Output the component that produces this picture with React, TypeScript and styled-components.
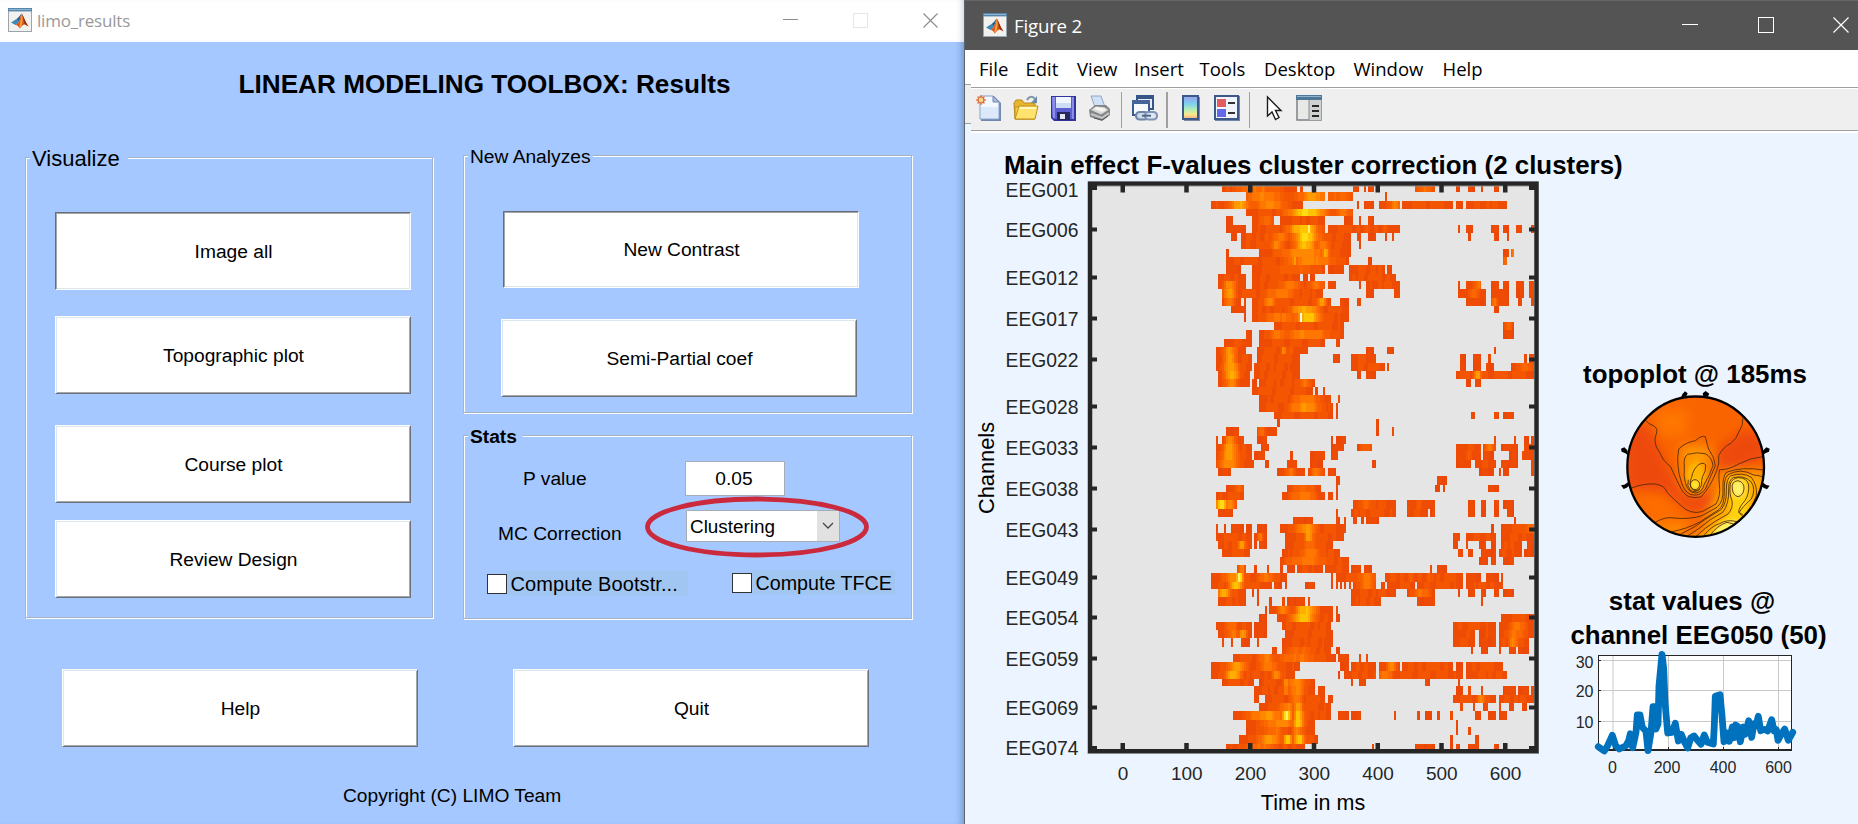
import React from "react";
import styled, { createGlobalStyle, css } from "styled-components";

const GlobalStyle = createGlobalStyle`
  * { box-sizing: border-box; }
  body { margin: 0; background: #ecf5ff; overflow: hidden; font-family: "Liberation Sans", Arial, sans-serif; color: #000; }
  svg { display: block; }
`;

const BLUE = "#a4c8ff";
const UI_FONT = `"Open Sans", "Noto Sans", sans-serif`;

const Desktop = styled.main`
  display: flex;
  width: 1858px;
  height: 824px;
  overflow: hidden;
`;

/* ---------- dialog window ---------- */

const Dialog = styled.section`
  display: flex;
  flex-direction: column;
  width: 964px;
  height: 824px;
  background: ${BLUE};
  box-shadow: inset -7px 0 7px -5px rgba(50, 80, 120, 0.45);
`;

const DialogBar = styled.header`
  display: flex;
  align-items: center;
  height: 42px;
  padding: 0 26px 2px 8px;
  background: #fff;
  box-shadow: inset -6px 0 7px -5px rgba(50, 80, 120, 0.3);
`;

const BarTitle = styled.span<{ $color: string; $size: number; $gap: number; $drop?: number }>`
  flex: 1;
  margin-left: ${(p) => p.$gap}px;
  padding-top: ${(p) => p.$drop ?? 0}px;
  color: ${(p) => p.$color};
  font: ${(p) => p.$size}px/24px ${UI_FONT};
  letter-spacing: -0.2px;
`;

const WindowButtons = styled.div<{ $gap: number }>`
  display: flex;
  gap: ${(p) => p.$gap}px;
`;

const DialogTitle = styled.h1`
  margin: 27px 0 0 5px;
  font-size: 26.15px;
  line-height: 30px;
  font-weight: 700;
  text-align: center;
  white-space: nowrap;
`;

const Columns = styled.div`
  display: flex;
  align-items: flex-start;
  gap: 30px;
  height: 570px;
  padding: 56px 0 0 25px;
`;

const RightColumn = styled.div`
  display: flex;
  flex-direction: column;
  gap: 22px;
`;

const Group = styled.div<{ $w: number; $h: number; $drop?: number }>`
  display: flex;
  flex-direction: column;
  width: ${(p) => p.$w}px;
  height: ${(p) => p.$h}px;
  margin-top: ${(p) => p.$drop ?? 0}px;
  border: 1px solid #a5b3c4;
  box-shadow: 1px 1px 0 #fdffff, inset 1px 1px 0 #fdffff;
`;

const Legend = styled.div<{ $size: number; $bold?: boolean; $w: number }>`
  align-self: flex-start;
  width: ${(p) => p.$w}px;
  height: 26px;
  margin: -12px 0 0 4px;
  padding-left: 2px;
  background: ${BLUE};
  font-size: ${(p) => p.$size}px;
  line-height: 26px;
  font-weight: ${(p) => (p.$bold ? 700 : 400)};
  white-space: nowrap;
`;

const raised = css`
  border-color: #fff #6d727a #6d727a #fff;
  box-shadow: inset 1px 1px 0 #dbe7ee, inset -1px -1px 0 #a3a6aa;
`;
const sunken = css`
  border-color: #686c75 #fff #fff #686c75;
  box-shadow: inset 1px 1px 0 #a3a6aa, inset -1px -1px 0 #dbe7e8;
`;

const PushButton = styled.button<{ $sunken?: boolean; $top?: number; $left?: number; $h?: number }>`
  flex: none;
  width: 356px;
  height: ${(p) => p.$h ?? 78}px;
  margin: ${(p) => p.$top ?? 0}px 0 0 ${(p) => p.$left ?? 0}px;
  padding: 1px 0 0 1px;
  background: #fff;
  border: 1px solid;
  ${(p) => (p.$sunken ? sunken : raised)}
  font: 19.2px "Liberation Sans", Arial, sans-serif;
  color: #000;
`;

const StatsRow = styled.div<{ $top: number; $left: number }>`
  display: flex;
  align-items: flex-start;
  margin: ${(p) => p.$top}px 0 0 ${(p) => p.$left}px;
`;

const FieldLabel = styled.label<{ $w: number; $drop: number }>`
  width: ${(p) => p.$w}px;
  padding-top: ${(p) => p.$drop}px;
  font-size: 19.2px;
  line-height: 22px;
  white-space: nowrap;
`;

const NumberBox = styled.div`
  width: 100px;
  height: 35px;
  padding-right: 2px;
  border: 1px solid #a6adb5;
  background: #fff;
  font-size: 19.2px;
  line-height: 34px;
  text-align: center;
`;

const Popup = styled.div`
  position: relative;
  display: flex;
  justify-content: space-between;
  width: 154px;
  height: 32px;
  padding-left: 3px;
  border: 1px solid #a6adb5;
  background: #fff;
  font-size: 18.9px;
  line-height: 31px;
`;

const PopupArrow = styled.span`
  display: flex;
  align-items: center;
  justify-content: center;
  width: 22px;
  background: #e1e1e1;
`;

const Highlight = styled.svg`
  position: absolute;
  left: -43px;
  top: -16px;
`;

const Checks = styled(StatsRow)`
  gap: 44px;
`;

const Check = styled.div<{ $w: number; $lift?: number }>`
  display: flex;
  align-items: center;
  width: ${(p) => p.$w}px;
  margin-top: -${(p) => p.$lift ?? 0}px;
`;

const CheckBox = styled.span`
  flex: none;
  width: 20px;
  height: 20px;
  border: 1px solid #333;
  background: #fff;
`;

const CheckText = styled.span<{ $size: number; $spacing?: number }>`
  flex: 1;
  height: 25px;
  padding-left: 4px;
  background: #a1c6f1;
  font-size: ${(p) => p.$size}px;
  line-height: 26px;
  letter-spacing: ${(p) => p.$spacing ?? 0}px;
  white-space: nowrap;
`;

const Actions = styled.div`
  display: flex;
  gap: 95px;
  padding-left: 62px;
`;

const Copyright = styled.footer`
  margin: 36px 0 0 343px;
  font-size: 19.2px;
  line-height: 26px;
`;

/* ---------- figure window ---------- */

const Figure = styled.section`
  display: flex;
  flex-direction: column;
  width: 894px;
  height: 824px;
  border-left: 1px solid #5d6570;
  background: #ecf5ff;
`;

const FigureBar = styled.header`
  display: flex;
  align-items: center;
  height: 50px;
  padding: 0 9px 2px 18px;
  border-top: 1px solid #676767;
  background: #545454;
`;

const MenuBar = styled.nav`
  display: flex;
  height: 37px;
  padding-left: 14px;
  background: #fff;
  font: 18.5px/38px ${UI_FONT};
`;

const MenuItem = styled.span<{ $w: number }>`
  width: ${(p) => p.$w}px;
  white-space: nowrap;
`;

const ToolbarRow = styled.div`
  display: flex;
  height: 46px;
`;

const ToolbarEdge = styled.div`
  width: 6px;
  height: 40px;
  margin-top: -3px;
  border: solid #a0a0a0;
  border-width: 1px 0;
  background: #efefef;
`;

const Toolbar = styled.div`
  display: flex;
  flex: 1;
  align-items: flex-start;
  height: 46px;
  padding: 5px 0 0 5px;
  background: linear-gradient(#a0a0a0 0 1px, #fff 1px 2px, #efefef 2px 43px, #a0a0a0 43px 44px, #fff 44px 46px);
`;

const Tool = styled.span<{ $w: number }>`
  width: ${(p) => p.$w}px;
  padding-top: 3px;
`;

const Separator = styled.span<{ $w: number; $thick?: number }>`
  width: ${(p) => p.$w}px;
  height: 36px;
  border-left: ${(p) => p.$thick ?? 1}px solid #a0a0a0;
`;

const PlotTitle = styled.h2<{ $shift?: number; $line?: number; $above?: number }>`
  margin: 0 0 0 ${(p) => p.$shift ?? 0}px;
  padding-top: ${(p) => p.$above ?? 0}px;
  font-size: 25.9px;
  line-height: ${(p) => p.$line ?? 30}px;
  font-weight: 700;
  text-align: center;
  white-space: nowrap;
`;

const MainTitle = styled(PlotTitle)`
  height: 47px;
  padding: 17px 0 0 39px;
  text-align: left;
`;

const Plots = styled.div`
  display: flex;
  padding-left: 6px;
`;

const SidePlots = styled.div`
  display: flex;
  flex-direction: column;
  align-items: center;
  width: 278px;
  margin-left: 11px;
  padding-top: 179px;
`;

const CourseFrame = styled.div`
  margin: -3px 18px 0 0;
`;

/* ---------- icons ---------- */

const MatlabIcon = () => (
  <svg width="24" height="24" viewBox="0 0 24 24">
    <rect x=".5" y=".5" width="23" height="23" fill="#f1f1f0" stroke="#9aa5ae" />
    <rect x="0" y="0" width="24" height="3.4" fill="#5685ab" />
    <rect x="1" y="1" width="22" height="1" fill="#8fb4d0" />
    <path d="M3 14.5 8.5 11l2.5 3-3.5 3z" fill="#3f87b5" />
    <path d="M8.5 11C10.500 10 11.500 8 13.500 5.500L11 14z" fill="#24608f" />
    <path d="M7.500 17 11 14C12 11 12.500 8 13.700 5.500 15.500 8 17 13.500 20.500 18.500 18 17 16.700 15.600 15 17L11.500 20.500C10.500 18.500 9.500 17 7.500 17z" fill="#d95319" />
    <path d="M13.700 5.500C15 8 15 13 13.300 18.700L11.500 20.500C10.800 19 12.900 12 13.700 5.500z" fill="#f2a13c" />
    <path d="M13.900 5.500C15.800 8.500 17.200 14 20.500 18.500L16.500 15.800C15.500 12 15 8.500 13.900 5.500z" fill="#932a12" />
  </svg>
);

const MinIcon = ({ size, color }: { size: number; color: string }) => (
  <svg width={size} height={size} viewBox={`0 0 ${size} ${size}`} shapeRendering="crispEdges">
    <rect x="0" y={Math.floor(size / 2) - 1} width={size} height="1" fill={color} />
  </svg>
);
const MaxIcon = ({ size, color }: { size: number; color: string }) => (
  <svg width={size} height={size} viewBox={`0 0 ${size} ${size}`}>
    <rect x=".5" y=".5" width={size - 1} height={size - 1} fill="none" stroke={color} />
  </svg>
);
const CloseIcon = ({ size, color }: { size: number; color: string }) => (
  <svg width={size} height={size} viewBox={`0 0 ${size} ${size}`}>
    <path d={`M.5 .5 ${size - 0.5} ${size - 0.5}M${size - 0.5} .5 .5 ${size - 0.5}`} stroke={color} strokeWidth="1.2" />
  </svg>
);

const NewIcon = () => (
  <svg width="26" height="26" viewBox="0 0 26 26">
    <path d="M5 1h13l7 7v18H5z" fill="#7388ad" />
    <path d="M4 1h13l6 6v17H4z" fill="#f3f8ff" stroke="#7f9dcb" />
    <path d="M5 12h17v11H5z" fill="#dce9fb" />
    <path d="M17 1v6h6z" fill="#a9bddf" stroke="#7388b8" />
    <g stroke="#e58a5b" strokeWidth="1.6"><path d="M5 0v10M0 5h10M1.500 1.500l7 7M8.500 1.500l-7 7" /></g>
    <circle cx="5" cy="5" r="3" fill="#fbd28d" stroke="#d6693c" strokeWidth="1.2" />
  </svg>
);
const OpenIcon = () => (
  <svg width="26" height="26" viewBox="0 0 26 26">
    <path d="M1 8l2-3h6l2 3h11v16H2z" fill="#e7b52d" stroke="#b98a1e" />
    <path d="M2 12h19v12H2z" fill="#f6cf4a" stroke="#c1901f" />
    <path d="M6 11h19l-3 13H2z" fill="#ffe36d" stroke="#c1901f" />
    <path d="M7 13h16" stroke="#fff7bd" strokeWidth="2" />
    <path d="M14 5c2-4 6-4 8-1" fill="none" stroke="#7c95ab" strokeWidth="2" />
    <path d="M24 1v7h-6z" fill="#6c8ba6" />
  </svg>
);
const SaveIcon = () => (
  <svg width="25" height="26" viewBox="0 0 25 26">
    <path d="M0 1h25v25H3l-3-3z" fill="#33349a" />
    <path d="M1 2h22v22H3l-2-2z" fill="#5d5fd0" />
    <path d="M1 2h3v21H2zM21 2h2v22h-2z" fill="#8b8deb" />
    <rect x="5" y="2" width="15" height="11" fill="#f1f5ff" />
    <path d="M5 8h15v5H5z" fill="#cddcf5" />
    <rect x="6" y="17" width="13" height="8" fill="#26275d" />
    <rect x="9" y="19" width="5" height="5" fill="#e5e8f2" />
  </svg>
);
const PrintIcon = () => (
  <svg width="24" height="26" viewBox="0 0 24 26">
    <path d="M3 1h10l4 11H7z" fill="#cfe0f7" stroke="#8ea6c8" />
    <path d="M1 15l6-5h11l4 4v6l-8 6L2 22z" fill="#85878a" />
    <path d="M2 15l6-4 9 1 4 3-8 5z" fill="#d7d8d6" stroke="#77797b" strokeWidth=".7" />
    <path d="M8 12l8 1 2 2-4 2-8-3z" fill="#f5f5ef" />
    <path d="M3 19l11 4 7-5" fill="none" stroke="#c5c7c9" strokeWidth="2" />
    <path d="M6 23l8 2 6-4" fill="none" stroke="#55585b" />
  </svg>
);
const LinkIcon = () => (
  <svg width="26" height="26" viewBox="0 0 26 26">
    <rect x="5" y="1" width="16" height="13" fill="#e9effa" stroke="#355487" strokeWidth="2" />
    <rect x="4" y="0" width="18" height="4" fill="#355487" />
    <rect x="1" y="6" width="16" height="14" fill="#f7faff" stroke="#3c5b8e" strokeWidth="2" />
    <rect x="0" y="5" width="18" height="4" fill="#44649a" />
    <rect x="4" y="17" width="12" height="7.500" rx="3.700" fill="#cfd9e7" stroke="#6c84a5" strokeWidth="2.200" />
    <rect x="13" y="17" width="12" height="7.500" rx="3.700" fill="#dfe6f0" stroke="#7f95b3" strokeWidth="2.200" />
    <path d="M10 20.700h9" stroke="#4d668a" strokeWidth="2" />
  </svg>
);
const ColorbarIcon = () => (
  <svg width="18" height="26" viewBox="0 0 18 26">
    <defs>
      <linearGradient id="cb" x2="0" y2="1">
        <stop offset="0" stopColor="#9b9ff0" /><stop offset=".35" stopColor="#7fd2ee" />
        <stop offset=".6" stopColor="#b7eeb5" /><stop offset=".8" stopColor="#f8e98e" /><stop offset="1" stopColor="#f5a984" />
      </linearGradient>
    </defs>
    <rect x="2" y="2" width="16" height="24" fill="#7c8aa3" />
    <rect x="1" y="1" width="15" height="23" fill="url(#cb)" stroke="#3d5788" strokeWidth="2" />
  </svg>
);
const LegendIcon = () => (
  <svg width="26" height="26" viewBox="0 0 26 26">
    <rect x="1" y="1" width="25" height="25" fill="#7286ab" />
    <rect x="1" y="1" width="23" height="23" fill="#f0f4fd" stroke="#3d5788" strokeWidth="2" />
    <rect x="3" y="4" width="9" height="8" fill="#e25b5f" />
    <rect x="3" y="14" width="9" height="8" fill="#6368e6" />
    <path d="M14 8h7M14 18h7" stroke="#333" strokeWidth="2" />
  </svg>
);
const ArrowIcon = () => (
  <svg width="17" height="26" viewBox="0 0 17 26">
    <path d="M1.500 2v19l4.500-4 3.500 7.500 3.500-2-3.500-7H15z" fill="#fff" stroke="#1d1d1d" strokeWidth="1.400" />
  </svg>
);
const PanelIcon = () => (
  <svg width="26" height="26" viewBox="0 0 26 26">
    <rect x="1" y="1" width="24" height="24" fill="#e8e8e6" stroke="#7b8188" strokeWidth="1.500" />
    <rect x="0" y="0" width="26" height="5" fill="#4d7796" />
    <rect x="1" y="1" width="24" height="1" fill="#8fb2ca" />
    <rect x="13" y="5" width="12" height="20" fill="#cfd0d0" />
    <path d="M13 5v20" stroke="#85898d" />
    <path d="M16 11h7M16 16h7M16 21h7" stroke="#262626" strokeWidth="2" />
  </svg>
);

/* ---------- channel x time image ---------- */

// Top edge of every channel row, then the bottom of the last one.
const ROW_Y = [
  185, 192, 201, 209, 216, 225, 233, 241, 249, 257, 265, 274, 281, 289, 298, 306, 313, 322, 330, 339, 347, 354, 363, 371,
  379, 387, 395, 403, 412, 419, 427, 436, 444, 451, 460, 468, 476, 485, 492, 500, 509, 517, 524, 533, 541, 549, 557, 565,
  573, 582, 589, 597, 606, 614, 622, 630, 638, 647, 654, 662, 671, 679, 686, 695, 703, 711, 720, 727, 735, 744, 750,
];

// Each row: significant spans "from-to" in thirds of a pixel, then peaks "centre,width,level".
const ROWS = `
126-351 360-369 519-537 552-558 564-582 705-765 828-840 864-885 903-909 942-957|230,60,.4 735,20,.4
198-435 444-519 615-621|250,50,.52 400,40,.6 480,30,.35
93-369 531-537 552-582 597-660 666-819 828-849 858-981|180,22,.72 270,40,.52 645,12,.52
198-519|380,45,.9 490,20,.45
138-159 216-282 300-435 492-519 537-543 564-582|260,15,.4
138-198 216-435 444-660 834-840 858-879 933-957 969-987 1008-1026 1053-1064|370,35,.85 385,5,1.05
153-171 183-513 531-543 564-588 615-621 636-642 864-873 942-957 981-987|378,30,.88 300,20,.45
183-513 537-543|375,25,.8 290,15,.55 430,15,.5
138-147 237-513 969-987 993-1002|370,60,.55 437,8,.75 998,5,.5
138-507 564-576 969-981|390,60,.55 345,6,.65 975,8,.4
138-183 216-435 444-492 507-615 621-636|350,60,.3
114-198 216-360 369-384 390-405 507-648|
114-198 216-435 444-468 537-543 558-660 834-840 858-903 933-957 969-987 1008-1032 1047-1064|148,14,.6 330,30,.45 410,20,.4 895,14,.4
126-429 558-582 642-660 834-918 933-987 1008-1032 1047-1064|148,14,.65 300,40,.45 880,10,.4
126-183 192-198 216-453 480-507 531-543 858-918 933-987 1014-1026 1053-1064|150,12,.5 270,15,.55 425,12,.6 945,8,.45
153-198 216-507 942-957|375,35,.7
192-198 216-507|385,28,.85 300,40,.45 363,4,1.7
282-492 969-1002|984,10,.35
198-216 237-492 969-1002|380,60,.5 290,20,.45
132-216 237-435 468-480|
108-198 231-384 558-582 621-642 942-948|148,16,.6 312,5,.6
108-216 231-360 459-480 513-588 840-858 879-903 924-933 1032-1041 1047-1064|150,16,.62
108-216 222-360 513-615 621-627 840-858 879-903 918-942 993-1064|153,18,.68 1035,20,.36
114-210 222-360 531-543 558-588 828-1064|155,18,.72 893,9,.65
114-210 216-231 237-405 858-873 885-903|155,18,.5 375,15,.4
216-399 405-414 429-435|
237-453 474-480|378,32,.5
237-459 468-474|375,38,.6
282-459 468-474 873-885 942-957 969-1002|
291-300 588-597|
138-177 231-291 588-597 636-642|245,10,.35
108-114 126-192 231-261 453-459 468-498 942-948 1002-1008 1032-1047 1053-1064|150,12,.55
108-216 243-267 453-492 531-576 828-903 909-948 963-1014 1032-1064|150,18,.65 560,12,.35 930,12,.42
108-216 222-255 330-339 390-435 453-474 828-903 909-942 987-1014 1026-1064|150,20,.65
108-222 255-267 321-351 390-429 576-588 828-873 885-948 963-1014 1053-1064|148,24,.6
114-153 291-375 384-435 444-468 897-942 957-963 969-987 1053-1064|333,10,.45 410,12,.5
468-480 771-801|
138-192 321-423 468-474 765-780 789-795 924-957|370,30,.35 175,10,.35
108-192 306-435 444-459 468-474|370,30,.48
108-171 519-648 681-765 864-885 903-918 942-957 969-1002|125,14,.95 148,15,.55 560,20,.32
114-159 468-474 513-648 681-744 750-765 864-885 903-918 942-957 981-1002|
339-399 468-480 492-498 519-531 543-552 558-597 1002-1008|
108-114 132-138 153-192 198-216 231-261 300-498 933-942 963-1064|378,26,.6 1050,12,.4
108-216 222-231 231-261 315-492 819-840 858-948 963-1064|388,12,.66 240,6,.5
114-216 222-231 237-261 315-459 819-834 858-864 897-918 933-948 963-1026 1041-1064|185,10,.6 390,15,.4
126-210 306-480 834-849 864-879 903-948 957-1026 1032-1064|390,24,.5
300-507 897-924 933-948 969-1002|380,50,.45
171-198 222-231 261-267 300-309 321-345 351-429 435-507 513-543 552-576 750-756 771-801|185,8,.5
93-321 453-459 468-588 615-849 858-903 918-957 963-969|178,10,.95 160,22,.6 260,20,.45 560,20,.45
93-276 282-306 315-321 375-405 453-459 468-474 480-486 492-498 507-513 519-588 603-615 621-705 711-849 858-969|168,18,.8 560,20,.45
114-198 216-222 231-237 513-648 681-765 834-840 864-885 903-918 942-957 969-1002|132,14,.8 725,25,.4
114-198 231-237 267-276 306-315 321-375 384-390 513-603 711-765 903-909|
255-261 267-459 468-474|378,24,.82 310,15,.5
237-261 291-459 468-480 963-1064|370,26,.86
108-216 222-261 306-453 819-948 957-1064|155,15,.4 1015,20,.46
114-216 222-261 315-459 819-885 897-948 957-1064|188,10,.62 160,15,.45 1008,22,.45
126-132 153-159 183-210 231-237 306-459 819-885 897-948 957-1047|1000,12,.52
276-291 306-453 468-480 873-879 903-924 957-963 987-1008 1014-1047|360,30,.35
159-468 474-507 537-543 558-564|350,50,.42 260,20,.48
93-360 480-507 513-588 597-660 666-819 828-849 858-969|170,22,.66 265,20,.5 635,12,.55
93-345 474-480 492-588 597-849 858-981|160,20,.76 290,12,.55 615,20,.45
126-222 237-405 513-519 537-558 735-750 834-840|350,22,.55 318,6,.6
222-405 414-435 828-849 864-873 903-909 969-1008 1014-1047 1053-1064|350,18,.55 318,6,.55
222-237 255-435 444-459 819-948 957-1064|903,10,.5 350,16,.45
237-453 840-849 879-885 909-924 957-963 987-1002 1026-1041|355,12,.68 320,20,.5
159-453 474-507 513-543 642-648 711-720 735-756 771-780 810-819 885-903 924-948 957-981|320,12,.95 355,12,.86 260,45,.6
198-405 828-834|355,12,.86 300,45,.55
198-405 828-834 864-873|355,14,.5 280,30,.4
177-414 810-819 885-897|358,12,.88 323,10,.84 270,30,.62
138-375 576-582 705-765 810-819 828-840 864-897 942-957|240,40,.42
`.trim().split("\n");

const HEAT = ["#ea4708", "#ee4c05", "#f45500", "#f75e00", "#fb6700", "#ff7600", "#ff8800", "#ff9a00", "#ffad00", "#ffc400", "#ffdd12", "#fff06a", "#fffff0"];
const CELL = 6;

function buildHeatPaths(): string[] {
  const paths = HEAT.map(() => "");
  ROWS.forEach((line, row) => {
    const [spanText, peakText] = line.split("|");
    const peaks = peakText.split(" ").filter(Boolean).map((p) => p.split(",").map(Number));
    spanText.split(" ").forEach((span) => {
      const [from, to] = span.split("-").map(Number);
      for (let x = from; x < to; ) {
        const next = Math.min(to, (Math.floor(x / CELL) + 1) * CELL);
        const mid = (x + next) / 2;
        const wide = to - from > 60 ? 0.08 : 0.02;
        const wave = 0.5 + 0.25 * Math.sin(mid / 9 + row * 1.7) + 0.25 * Math.sin(mid / 4.3 + row * 0.6);
        const noise = wave * 0.15;
        const edge = Math.min(1, Math.min(mid - from, to - mid) / 30);
        let level = (wide + noise) * (0.4 + 0.6 * edge);
        peaks.forEach(([c, w, l]) => {
          const d = (mid - c) / w;
          level = Math.max(level, l * Math.exp(-0.5 * d * d) + (noise - 0.08) * 0.6);
        });
        const bin = level > 1.3 ? 12 : Math.max(0, Math.min(11, Math.round(level * 11)));
        const left = 1180 + x / 3;
        paths[bin] += `M${left.toFixed(2)} ${ROW_Y[row]}h${((next - x) / 3).toFixed(2)}V${ROW_Y[row + 1]}h${((x - next) / 3).toFixed(2)}z`;
        x = next;
      }
    });
  });
  return paths;
}

const CHANNEL_TICKS: [string, number][] = [
  ["EEG001", 188], ["EEG006", 229], ["EEG012", 277], ["EEG017", 318], ["EEG022", 359], ["EEG028", 406], ["EEG033", 447],
  ["EEG038", 488], ["EEG043", 529], ["EEG049", 577], ["EEG054", 617], ["EEG059", 658], ["EEG069", 707], ["EEG074", 747],
];
const TIME_TICKS = [0, 100, 200, 300, 400, 500, 600];

const ChannelImage = () => {
  const paths = buildHeatPaths();
  return (
    <svg width="574" height="640" viewBox="971 180 574 640" fontFamily="Liberation Sans, Arial, sans-serif">
      <rect x="1090" y="183.500" width="447" height="568" fill="#e5e5e5" />
      <g shapeRendering="crispEdges">
        {paths.map((d, i) => <path key={i} d={d} fill={HEAT[i]} />)}
      </g>
      <g fill="none">
        <rect x="1090" y="184" width="446.500" height="567.500" stroke="#8a8b8c" strokeWidth="5" />
        <rect x="1090" y="183.500" width="446.500" height="567.500" stroke="#262626" strokeWidth="4" />
      </g>
      <g fill="#262626">
        {TIME_TICKS.map((t) => {
          const x = 1122.5 + t * 0.6375;
          return (
            <g key={t}>
              <rect x={x - 2} y="185" width="4.500" height="7.500" />
              <rect x={x - 2} y="743" width="4.500" height="7.500" />
              <text x={x + 0.5} y="780" fontSize="19" textAnchor="middle">{t}</text>
            </g>
          );
        })}
        {CHANNEL_TICKS.map(([name, y], i) => {
          const edge = i === 0 || i === CHANNEL_TICKS.length - 1;
          return (
            <g key={name}>
              {!edge && <rect x="1092" y={y - 1.5} width="5" height="4" />}
              {!edge && <rect x="1529" y={y - 1.5} width="6" height="4" />}
              <text x="1078.500" y={y + (i === 0 ? 9 : 8)} fontSize="19.300" textAnchor="end">{name}</text>
            </g>
          );
        })}
        <path d="M1092 185h5v5h-5zM1529 185h6v5h-6zM1092 746h5v5h-5zM1529 746h6v5h-6z" />
      </g>
      <text x="1313" y="810" fontSize="21.500" textAnchor="middle">Time in ms</text>
      <text transform="translate(994 468) rotate(-90)" fontSize="21.800" textAnchor="middle">Channels</text>
    </svg>
  );
};

/* ---------- scalp map ---------- */

const ScalpMap = () => (
  <svg width="156.670" height="153.330" viewBox="200 120 470 460">
    <defs>
      <clipPath id="head"><ellipse cx="436" cy="353" rx="204" ry="210" /></clipPath>
      <filter id="soft" x="-50%" y="-50%" width="200%" height="200%"><feGaussianBlur stdDeviation="16" /></filter>
      <filter id="softer" x="-50%" y="-50%" width="200%" height="200%"><feGaussianBlur stdDeviation="7" /></filter>
    </defs>
    <g clipPath="url(#head)">
      <rect x="220" y="130" width="430" height="440" fill="#f96400" />
      <g filter="url(#soft)">
        <path d="M220 220 300 230 350 350 400 440 520 420 500 300 580 240 650 260 650 330 520 370 500 470 420 490 340 430 220 420z" fill="#ee4909" />
        <path d="M320 180h90v80h-90z" fill="#ff7600" />
        <path d="M390 290h90v110l-40 35-40-35z" fill="#ff9a05" />
        <path d="M520 370h130v230H350l110-50z" fill="#ffa900" />
        <path d="M250 430 350 440 400 500 300 520z" fill="#fe6d00" />
        <path d="M290 530l130-15-40 70z" fill="#ff8a00" />
      </g>
      <g filter="url(#softer)">
        <ellipse cx="436" cy="385" rx="27" ry="45" fill="#ffb600" />
        <ellipse cx="434" cy="408" rx="12" ry="14" fill="#ffee30" />
        <path d="M535 385l60 0 5 60-15 60-40 50-90 20 85-85z" fill="#ffd20b" />
        <ellipse cx="563" cy="418" rx="18" ry="25" fill="#fff169" />
        <path d="M490 560l20-35 50-10-5 50z" fill="#fff46d" />
      </g>
      <g fill="none" stroke="#4b260b" strokeWidth="2.500">
        <path d="M285 213Q292 224 309 230Q324 238 318 255Q310 270 318 294Q330 312 338 330Q350 346 360 352L385 405Q398 435 415 443Q435 448 452 444Q480 415 499 365Q508 345 505 320Q520 292 542 283Q560 268 565 250Q579 230 578 205" />
        <path d="M383 350Q380 330 385 300Q405 280 435 275Q455 258 465 263Q470 285 475 300Q493 325 495 350Q480 385 465 420Q450 440 430 438Q408 438 395 405Q384 375 383 350" />
        <path d="M402 355Q398 325 412 316Q440 308 465 314Q485 325 488 350Q478 380 462 405Q455 432 434 432Q412 430 405 400Q399 380 402 355" />
        <path d="M424 385Q428 360 445 347Q460 338 466 348Q468 365 457 382Q452 395 454 408Q445 428 432 425Q420 418 419 405Q420 392 424 385" />
        <ellipse cx="434" cy="407" rx="14" ry="15" />
        <path d="M414 392Q408 411 420 424Q436 433 449 420" />
        <path d="M242 418Q275 403 315 405Q345 410 350 430Q370 450 390 468Q420 498 455 488L497 465Q512 440 507 405Q504 375 508 362Q535 363 565 345Q600 326 638 323" />
        <path d="M315 520Q345 502 370 507Q420 512 455 500L500 475Q520 458 518 420Q516 385 528 370Q575 352 640 363" />
        <path d="M360 549Q410 540 450 518L505 482Q522 470 522 430Q520 390 532 378Q570 355 610 378Q640 380 640 390" />
        <path d="M390 556Q435 535 465 511L512 482Q529 463 528 425Q528 388 541 381Q575 368 603 385Q622 410 618 440Q610 460 607 465" />
        <path d="M410 562Q450 538 480 512L517 490Q537 465 535 420Q534 393 549 386Q580 377 602 398Q618 420 603 450Q575 475 567 490Q572 495 577 497" />
        <path d="M436 563Q465 535 495 517L533 495Q549 478 545 455Q536 435 540 405Q546 387 565 386Q590 386 595 408Q597 435 584 455Q565 475 565 490L580 505" />
        <path d="M460 560Q485 530 508 524Q530 510 560 518" />
        <path d="M480 558Q500 530 530 520L550 525" />
        <path d="M546 420Q542 397 563 395Q583 400 581 420Q579 440 563 443Q548 440 546 420" />
      </g>
    </g>
    <ellipse cx="436" cy="353" rx="205" ry="210.500" fill="none" stroke="#000" strokeWidth="7" />
    <g fill="#000">
      <path d="M396 136l8-9 8 6-4 9-16 4zM457 133l9-7 11 8-5 9-13-2z" />
      <path d="M212 299l10-4 9 9 4 16-10-7-11-5zM658 299l-10-4-9 9-4 16 10-7 11-5zM212 409l10-2 12-8 4 10-9 7-9 4zM658 410l-10-2-12-8-4 10 9 7 9 4z" />
    </g>
  </svg>
);

/* ---------- course of one channel ---------- */

const COURSE = [
  [145, 533], [163, 546], [172, 532], [187, 499], [197, 530], [208, 540], [228, 530], [236, 515], [241, 494], [248, 536],
  [258, 490], [262, 438], [270, 438], [277, 475], [288, 487], [294, 545], [303, 490], [309, 413], [317, 413], [318, 480],
  [324, 465], [327, 350], [336, 256], [341, 300], [345, 400], [353, 492], [366, 490], [376, 463], [385, 516], [394, 496],
  [404, 520], [413, 537], [422, 507], [432, 501], [441, 512], [453, 526], [463, 498], [472, 520], [490, 525], [493, 470],
  [496, 382], [510, 377], [516, 440], [522, 518], [531, 492], [538, 517], [547, 474], [552, 506], [557, 468], [563, 472],
  [571, 518], [580, 474], [586, 496], [596, 455], [605, 505], [612, 464], [618, 470], [625, 442], [632, 485], [643, 481],
  [653, 486], [665, 452], [672, 485], [679, 482], [684, 514], [693, 497], [704, 480], [715, 514], [728, 490],
];

const CoursePlot = () => (
  <svg width="236" height="135" viewBox="1568 650 236 135" fontFamily="Liberation Sans, Arial, sans-serif">
    <rect x="1598.500" y="656.500" width="193" height="95" fill="#fff" />
    <g stroke="#c9c9c9">
      <path d="M1598 661.500h193M1598 691.500h193M1598 722.500h193M1613 656v95M1668.500 656v95M1723.500 656v95M1778.500 656v95" />
    </g>
    <rect x="1598.500" y="656.500" width="193" height="94.500" fill="none" stroke="#262626" />
    <path d="M1598 751h194" stroke="#262626" strokeWidth="2" />
    <path d="M1613.500 748v3M1668.500 748v3M1723.500 748v3M1778.500 748v3M1598 661.500h3M1598 691.500h3M1598 722.500h3" stroke="#262626" />
    <polyline
      points={COURSE.map(([x, y]) => `${(1550 + x / 3).toFixed(1)},${(570 + y / 3).toFixed(1)}`).join(" ")}
      fill="none" stroke="#0072bd" strokeWidth="6.800" strokeLinejoin="round" strokeLinecap="round"
    />
    <g fill="#262626" fontSize="16">
      {[["30", 669], ["20", 698], ["10", 728.5]].map(([t, y]) => <text key={t} x="1593.500" y={y} textAnchor="end">{t}</text>)}
      {[["0", 1612.5], ["200", 1667], ["400", 1723], ["600", 1778.5]].map(([t, x]) => <text key={t} x={x} y="773.500" textAnchor="middle">{t}</text>)}
    </g>
  </svg>
);

/* ---------- page ---------- */

const MENU: [string, number][] = [
  ["File", 46.5], ["Edit", 51.5], ["View", 57], ["Insert", 65.5], ["Tools", 64.5], ["Desktop", 89.5], ["Window", 89], ["Help", 60],
];

export default function App() {
  return (
    <>
      <GlobalStyle />
      <Desktop>
        <Dialog>
          <DialogBar>
            <MatlabIcon />
            <BarTitle $color="#999" $size={17} $gap={5} $drop={1}>limo_results</BarTitle>
            <WindowButtons $gap={55}>
              <MinIcon size={15} color="#8d8d8d" />
              <MaxIcon size={15} color="#e6e6e6" />
              <CloseIcon size={15} color="#8d8d8d" />
            </WindowButtons>
          </DialogBar>
          <DialogTitle>LINEAR MODELING TOOLBOX: Results</DialogTitle>
          <Columns>
            <Group $w={408} $h={461} $drop={2}>
              <Legend $size={22} $w={98}>Visualize</Legend>
              <PushButton $sunken $top={40} $left={29}>Image all</PushButton>
              <PushButton $top={26} $left={29}>Topographic plot</PushButton>
              <PushButton $top={31} $left={29}>Course plot</PushButton>
              <PushButton $top={17} $left={29}>Review Design</PushButton>
            </Group>
            <RightColumn>
              <Group $w={449} $h={258}>
                <Legend $size={19.2} $w={125}>New Analyzes</Legend>
                <PushButton $sunken $top={41} $left={39} $h={77}>New Contrast</PushButton>
                <PushButton $top={31} $left={37}>Semi-Partial coef</PushButton>
              </Group>
              <Group $w={449} $h={184}>
                <Legend $size={19.2} $w={55} $bold>Stats</Legend>
                <StatsRow $top={11} $left={59}>
                  <FieldLabel $w={162} $drop={7}>P value</FieldLabel>
                  <NumberBox>0.05</NumberBox>
                </StatsRow>
                <StatsRow $top={14} $left={34}>
                  <FieldLabel $w={188} $drop={13}>MC Correction</FieldLabel>
                  <Popup>
                    Clustering
                    <PopupArrow>
                      <svg width="12" height="8" viewBox="0 0 12 8"><path d="M1 1l5 5 5-5" fill="none" stroke="#444" strokeWidth="1.300" /></svg>
                    </PopupArrow>
                    <Highlight width="226" height="64" viewBox="0 0 226 64">
                      <ellipse cx="113" cy="32" rx="109.500" ry="28" fill="none" stroke="#cb2a3c" strokeWidth="4.800" />
                    </Highlight>
                  </Popup>
                </StatsRow>
                <Checks $top={26} $left={22.5}>
                  <Check $w={201}>
                    <CheckBox />
                    <CheckText $size={20} $spacing={0.1}>Compute Bootstr...</CheckText>
                  </Check>
                  <Check $w={163} $lift={1}>
                    <CheckBox />
                    <CheckText $size={19.7}>Compute TFCE</CheckText>
                  </Check>
                </Checks>
              </Group>
            </RightColumn>
          </Columns>
          <Actions>
            <PushButton>Help</PushButton>
            <PushButton>Quit</PushButton>
          </Actions>
          <Copyright>Copyright (C) LIMO Team</Copyright>
        </Dialog>

        <Figure>
          <FigureBar>
            <MatlabIcon />
            <BarTitle $color="#fff" $size={18.7} $gap={7} $drop={2}>Figure 2</BarTitle>
            <WindowButtons $gap={59.5}>
              <MinIcon size={16} color="#fff" />
              <MaxIcon size={16} color="#fff" />
              <CloseIcon size={16} color="#fff" />
            </WindowButtons>
          </FigureBar>
          <MenuBar>
            {MENU.map(([name, w]) => <MenuItem key={name} $w={w}>{name}</MenuItem>)}
          </MenuBar>
          <ToolbarRow>
            <ToolbarEdge />
            <Toolbar>
              <Tool $w={37}><NewIcon /></Tool>
              <Tool $w={38}><OpenIcon /></Tool>
              <Tool $w={37}><SaveIcon /></Tool>
              <Tool $w={33}><PrintIcon /></Tool>
              <Separator $w={11} />
              <Tool $w={34}><LinkIcon /></Tool>
              <Separator $w={16} $thick={2} />
              <Tool $w={32}><ColorbarIcon /></Tool>
              <Tool $w={35}><LegendIcon /></Tool>
              <Separator $w={17} />
              <Tool $w={30}><ArrowIcon /></Tool>
              <Tool $w={26}><PanelIcon /></Tool>
            </Toolbar>
          </ToolbarRow>
          <MainTitle>Main effect F-values cluster correction (2 clusters)</MainTitle>
          <Plots>
            <ChannelImage />
            <SidePlots>
              <PlotTitle>topoplot @ 185ms</PlotTitle>
              <ScalpMap />
              <PlotTitle $above={42} $line={34} $shift={-6}>stat values @</PlotTitle>
              <PlotTitle $line={34} $shift={7}>channel EEG050 (50)</PlotTitle>
              <CourseFrame><CoursePlot /></CourseFrame>
            </SidePlots>
          </Plots>
        </Figure>
      </Desktop>
    </>
  );
}
